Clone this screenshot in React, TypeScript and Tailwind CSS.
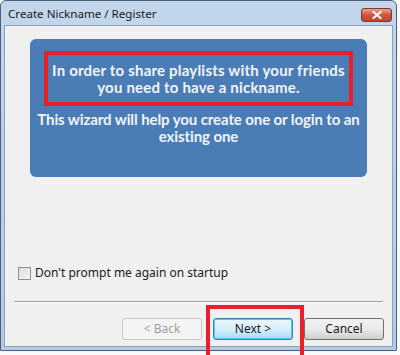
export default function App() {
  return (
    <div className="w-[400px] h-[355px] bg-[#f7f9fb] overflow-hidden relative" style={{ fontFamily: '"Noto Sans", "Open Sans", sans-serif' }}>
      <div className="w-[397px] h-[351px] border border-[#4e5f75] rounded-t-[6px] bg-gradient-to-b from-[#c2d6ec] to-[#b3cbe6] flex flex-col px-[3px] pb-[3px]">
        {/* title bar */}
        <div className="h-[22px] flex items-center justify-between shrink-0">
          <span className="text-[11.6px] text-[#1b1b1b] pl-[4px] pt-[4px]">Create Nickname / Register</span>
          <div className="w-[31px] h-[14px] mt-[5px] mr-[1px] rounded-[3px] border border-[#7a3b2f] bg-gradient-to-b from-[#e8a393] via-[#d0533b] to-[#c24630] flex items-center justify-center">
            <svg width="10" height="8" viewBox="0 0 10 8">
              <path d="M1.5 1 L8.5 7 M8.5 1 L1.5 7" stroke="#ffffff" strokeWidth="2" strokeLinecap="square" />
            </svg>
          </div>
        </div>
        {/* content */}
        <div className="flex-1 bg-[#f0f0f0] border border-[#8aa3bd] mt-[2px] flex flex-col relative">
          <div className="mt-[13px] ml-[25px] w-[337px] h-[138px] bg-[#4a7db5] rounded-[6px] flex flex-col items-center pt-[12px] text-[#f2f4f8]" style={{ fontFamily: '"Lato", sans-serif' }}>
            <div className="w-[309px] h-[55px] border-[4px] border-[#e8202a] flex flex-col items-center justify-center text-[15px] font-bold leading-[17px] tracking-[0.2px] whitespace-nowrap">
              <span>In order to share playlists with your friends</span>
              <span>you need to have a nickname.</span>
            </div>
            <div className="mt-[5px] flex flex-col items-center text-[15px] font-bold leading-[17px] tracking-[-0.1px] whitespace-nowrap">
              <span>This wizard will help you create one or login to an</span>
              <span>existing one</span>
            </div>
          </div>
          <div className="mt-[87px] ml-[13px] flex items-center gap-[4px]">
            <div className="w-[13px] h-[13px] border border-[#8e8f8f] bg-gradient-to-br from-[#dcdcdc] to-[#f7f7f7]" />
            <span className="text-[12px] text-[#1b1b1b]">Don't prompt me again on startup</span>
          </div>
          <div className="mt-[19px] mx-[9px] h-[2px] border-t border-[#a0a0a0] border-b border-b-white" />
          <div className="mt-[15px] flex pl-[117px] gap-[11px] text-[12px]">
            <div className="w-[80px] h-[22px] rounded-[3px] border border-[#c8c8c8] bg-[#f4f4f4] flex items-center justify-center text-[#a0a0a0]">&lt; Back</div>
            <div className="w-[80px] h-[22px] rounded-[3px] border border-[#3c7fb1] bg-gradient-to-b from-[#eaf6fd] via-[#d9f0fc] to-[#a7d9f5] flex items-center justify-center text-[#1b1b1b] shadow-[inset_0_0_0_1px_#48d0fc]">Next &gt;</div>
            <div className="w-[80px] h-[22px] rounded-[3px] border border-[#707070] bg-gradient-to-b from-[#f2f2f2] via-[#ebebeb] to-[#cfcfcf] flex items-center justify-center text-[#1b1b1b]">Cancel</div>
          </div>
          <div className="absolute left-[201px] top-[279px] w-[98px] h-[60px] border-[4px] border-[#e8202a]" />
        </div>
      </div>
    </div>
  );
}
